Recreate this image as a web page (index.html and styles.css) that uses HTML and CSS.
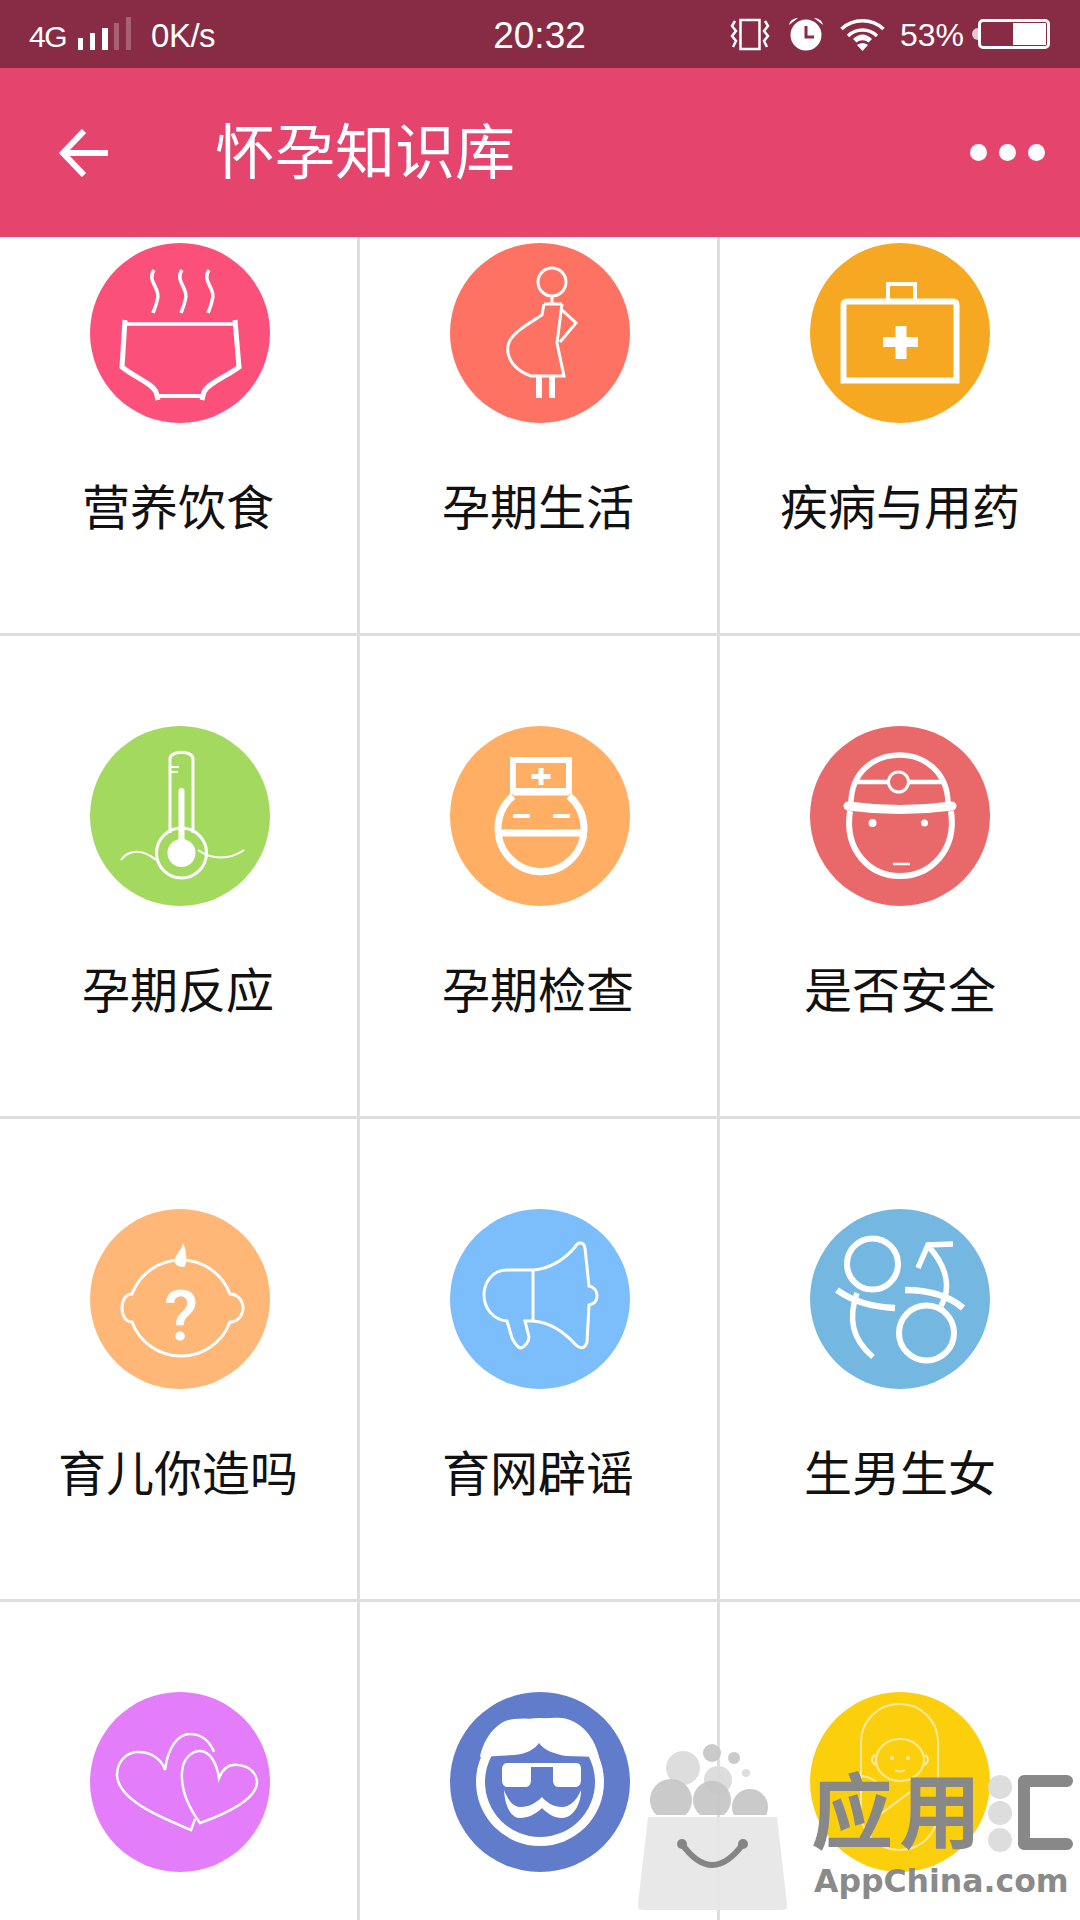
FILE: index.html
```html
<!DOCTYPE html>
<html lang="zh-CN">
<head>
    <meta charset="UTF-8">
    <title>怀孕知识库</title>
    <link rel="stylesheet" href="styles.css">
</head>
<body>

<div class="phone">
    <div class="status-bar">
        <div class="status-left">
            <span class="net">4G</span>
            <svg class="signal" width="56" height="34" viewBox="0 0 56 34">
                <rect class="fl" x="0" y="21" width="5" height="12"/>
                <rect class="fl" x="12" y="16" width="5" height="17"/>
                <rect class="fl" x="24" y="11" width="6" height="22"/>
                <rect class="dim" x="36" y="6" width="5" height="27"/>
                <rect class="dim" x="48" y="0" width="5" height="33"/>
            </svg>
            <span class="speed">0K/s</span>
        </div>
        <div class="clock">20:32</div>
        <div class="status-right">
            <svg width="40" height="34" viewBox="0 0 40 34">
                <rect class="ln" x="10.5" y="3" width="19" height="29" stroke-width="2.5"/>
                <path class="ln" stroke-width="2.5" d="M5 4 L2 9 L6 14 L2 19 L6 24 L3 30 M35 4 L38 9 L34 14 L38 19 L34 24 L37 30"/>
            </svg>
            <svg class="alarm" width="36" height="34" viewBox="0 0 36 34">
                <circle class="fl" cx="18" cy="18" r="15.5"/>
                <path class="fl" d="M1 8 C2 3 6 1 10 1 Z M35 8 C34 3 30 1 26 1 Z"/>
                <path class="cut" d="M18 9 V20 H26"/>
            </svg>
            <svg class="wifi" width="45" height="33" viewBox="0 0 45 33">
                <path class="ln" stroke-width="3.5" d="M1.5 11 C13 0 32 0 43.5 11 M8 18 C16 10 29 10 37 18"/>
                <path class="fl" d="M13 21 C19 15 26 15 32 21 L28.5 24.5 C25 21.5 20 21.5 16.5 24.5 Z M17 27 C20 24.5 25 24.5 28 27 L22.5 33 Z"/>
            </svg>
            <span class="percent">53%</span>
            <div class="battery">
                <div class="battery-nib"></div>
                <div class="battery-body"><div class="battery-level"></div></div>
            </div>
        </div>
    </div>

    <div class="title-bar">
        <svg class="back" width="50" height="48" viewBox="0 0 50 48">
            <path class="ln" stroke-width="6" d="M49 24 H4 M25 2 L4 24 L25 46"/>
        </svg>
        <h1 class="title">怀孕知识库</h1>
        <div class="more"><i></i><i></i><i></i></div>
    </div>

    <div class="grid">
        <div class="cell cell-first">
            <div class="circle c-food">
                <svg viewBox="0 0 180 180">
                    <path class="ln" stroke-width="3.5" d="M64 27 C56 38 72 46 67 58 C66 63 64 67 63 70 M92 27 C84 38 100 46 95 58 C94 63 92 67 91 70 M119 27 C111 38 127 46 122 58 C121 63 119 67 118 70"/>
                    <path class="ln" stroke-width="3.5" d="M35 81 H145"/>
                    <path class="ln" stroke-width="5" d="M35 77 L32 124 C44 134 62 140 66 149 L68 157 M145 77 L149 124 C136 134 118 140 114 149 L112 157"/>
                    <path class="ln" stroke-width="4" d="M68 153 H112"/>
                </svg>
            </div>
            <p class="name">营养饮食</p>
        </div>
        <div class="cell cell-first">
            <div class="circle c-life">
                <svg viewBox="0 0 180 180">
                    <circle class="ln" stroke-width="3" cx="102" cy="39" r="14"/>
                    <path class="ln" stroke-width="3" d="M102 53 V61 M94 61 H112 M112 61 L107 100 L114 133 H81 C66 128 56 116 58 103 C60 90 80 80 92 72 L94 61 M112 67 L126 80 L110 99"/>
                    <path class="fl" d="M86 133 h6 v22 h-6 Z M99 133 h6 v22 h-6 Z"/>
                </svg>
            </div>
            <p class="name">孕期生活</p>
        </div>
        <div class="cell cell-first">
            <div class="circle c-drug">
                <svg viewBox="0 0 180 180">
                    <path class="ln" stroke-width="6" d="M33.5 137.500 V62 Q33.500 58.500 37 58.500 H143 Q146.500 58.500 146.500 62 V137.500 Z"/>
                    <path class="ln" stroke-width="4" d="M78 56 V41 H105 V56"/>
                    <path class="fl" d="M85.5 83 h11 v11 h11.500 v10 h-11.500 v12 h-11 v-12 h-12.500 v-10 h12.500 Z"/>
                </svg>
            </div>
            <p class="name">疾病与用药</p>
        </div>

        <div class="cell">
            <div class="circle c-react">
                <svg viewBox="0 0 180 180">
                    <path class="ln" stroke-width="3" d="M80 107 V33 C80 24 103 24 103 33 V107"/>
                    <path class="ln" stroke-width="2" d="M80 41 H89 M80 46 H88"/>
                    <circle class="ln" stroke-width="3" cx="91.500" cy="127" r="25"/>
                    <circle class="fl" cx="91.500" cy="127" r="14"/>
                    <rect class="fl" x="88.500" y="62" width="6" height="60" rx="3"/>
                    <path class="ln" stroke-width="2" d="M31 134 C38 124 52 122 66 134 M108 124 C122 134 140 134 154 124"/>
                </svg>
            </div>
            <p class="name">孕期反应</p>
        </div>
        <div class="cell">
            <div class="circle c-check">
                <svg viewBox="0 0 180 180">
                    <rect class="ln" stroke-width="6" x="63" y="34" width="56" height="31"/>
                    <path class="ln" stroke-width="7" d="M63 70 A43 43 0 1 0 119 70 M63 66 H119 M48 107 H134"/>
                    <path class="ln" stroke-width="4" d="M63 90 H80 M103 90 H120"/>
                    <path class="ln" stroke-width="5" d="M81.500 50.500 H100.500 M91 42 V59"/>
                </svg>
            </div>
            <p class="name">孕期检查</p>
        </div>
        <div class="cell">
            <div class="circle c-safe">
                <svg viewBox="0 0 180 180">
                    <path class="ln" stroke-width="5.500" d="M41 78 C41 45 65 29 90 29 C113 29 138 45 138 78"/>
                    <path class="ln" stroke-width="4.500" d="M45 56 H78 M98 56 H133"/>
                    <circle class="ln" stroke-width="3" cx="88.500" cy="56" r="10"/>
                    <path class="ln" stroke-width="9" stroke-linecap="round" d="M38 80 Q90 87 142 80"/>
                    <path class="ln" stroke-width="6" d="M40 85 C34 125 60 150 90 150 C120 150 147 125 141 85"/>
                    <circle class="fl" cx="62.500" cy="97" r="4"/>
                    <circle class="fl" cx="114.500" cy="97" r="3.500"/>
                    <path class="ln" stroke-width="2.500" d="M83 138 H100"/>
                </svg>
            </div>
            <p class="name">是否安全</p>
        </div>

        <div class="cell">
            <div class="circle c-baby">
                <svg viewBox="0 0 180 180">
                    <path class="ln" stroke-width="3" d="M42 85 C36 85 32 91 32 99 C32 107 36 113 42 113 A52.300 52.300 0 0 0 140 113 C147 113 153 107 153 99 C153 91 147 85 140 85 A52.300 52.300 0 0 0 42 85 Z"/>
                    <path class="fl" d="M93 34 C92 42 82 48 85 54 C87 58 94 59 95 57 C97 52 97 42 93 34 Z"/>
                    <text class="ask" x="91" y="131" text-anchor="middle">?</text>
                </svg>
            </div>
            <p class="name">育儿你造吗</p>
        </div>
        <div class="cell">
            <div class="circle c-rumor">
                <svg viewBox="0 0 180 180">
                    <path class="ln" stroke-width="3" d="M83 61 H57 C42 61 34 74 34 86 C34 100 44 111 57 112 L62 129 C65 135 68 139 71 139 C75 138 79 132 79 128 L75 112 H83 C100 113 115 124 126 136 C130 140 135 140 137 133 L139 96 C144 95 147 92 147 87 C147 82 144 78 139 77 L135 39 C134 33 128 32 125 38 C115 50 100 60 83 61 Z M83 61 V112"/>
                </svg>
            </div>
            <p class="name">育网辟谣</p>
        </div>
        <div class="cell">
            <div class="circle c-sex">
                <svg viewBox="0 0 180 180">
                    <circle class="ln" stroke-width="6" cx="62.500" cy="55" r="25.500"/>
                    <path class="ln" stroke-width="6.500" d="M27 81 C42 92 62 98 85 99 M95 81 C118 81 138 86 153 99"/>
                    <path class="ln" stroke-width="5.500" d="M47 84 C38 110 42 130 63 148"/>
                    <circle class="ln" stroke-width="6" cx="116.500" cy="124" r="27.500"/>
                    <path class="ln" stroke-width="5.500" d="M131 97 C142 78 136 56 118 37 M143 35 L118 36 L108 59"/>
                </svg>
            </div>
            <p class="name">生男生女</p>
        </div>

        <div class="cell">
            <div class="circle c-love">
                <svg viewBox="0 0 180 180">
                    <path class="ln" stroke-width="2.500" d="M105 127 L101 138 C70 125 28 108 27 83 C27 68 38 60 48 60 C62 60 72 68 75 78 C78 55 88 42 100 42 C112 42 120 50 124 60"/>
                    <path class="ln" stroke-width="2.500" d="M110 131 C96 112 91 95 92 80 C93 66 102 59 110 59 C120 59 127 72 129 86 C133 76 140 72 148 73 C160 74 167 82 167 90 C167 108 135 122 110 131 Z"/>
                </svg>
            </div>
        </div>
        <div class="cell">
            <div class="circle c-granny">
                <svg viewBox="0 0 180 180">
                    <circle class="fl" cx="90" cy="90" r="64"/>
                    <circle class="bg-granny" cx="90" cy="90" r="55"/>
                    <path class="fl" d="M30 65 C34 45 48 28 64 27 C74 26 84 26 89 29 C94 26 102 25 112 26 C130 28 145 45 149 65 L116 64 C104 62 94 58 89 51 C84 58 76 62 64 63 Z"/>
                    <path class="fl" d="M57 71 H126 C130 71 131 74 131 77 V88 C131 92 129 95 126 95 H108 C105 95 103 92 103 88 V75 H81 V88 C81 92 79 95 76 95 H57 C54 95 52 92 52 88 V77 C52 74 54 71 57 71 Z"/>
                    <path class="fl" d="M54 98 C55 116 62 126 70 126 C78 126 86 122 92 116 C98 122 104 126 112 126 C122 126 131 114 131 98 C127 108 120 115 112 115 C104 115 97 111 92 105 C86 111 79 115 71 115 C63 115 58 108 54 98 Z"/>
                </svg>
            </div>
        </div>
        <div class="cell">
            <div class="circle c-care">
                <svg viewBox="0 0 180 180">
                    <rect class="ln-soft" x="51" y="12" width="77" height="146" rx="38"/>
                    <ellipse class="ln-soft" cx="90" cy="68" rx="24" ry="21"/>
                    <path class="ln-soft" d="M65 63 C61 65 61 71 66 73 M115 63 C119 65 119 71 114 73 M85 78 Q90 81 95 78 M50 84 C60 84 68 90 72 96 M100 100 L60 130"/>
                    <circle class="fl-soft" cx="82" cy="66" r="2"/>
                    <circle class="fl-soft" cx="98" cy="66" r="2"/>
                </svg>
            </div>
        </div>
    </div>

    <svg class="watermark" width="1080" height="1920" viewBox="0 0 1080 1920">
        <defs>
            <clipPath id="above-bag"><rect x="630" y="1740" width="170" height="75"/></clipPath>
        </defs>
        <g clip-path="url(#above-bag)">
            <circle class="wm-pale" cx="683" cy="1768" r="17"/>
            <circle class="wm-pale" cx="718" cy="1780" r="14"/>
            <circle class="wm-ball" cx="712" cy="1753" r="9"/>
            <circle class="wm-ball" cx="734" cy="1758" r="6"/>
            <circle class="wm-pale" cx="746" cy="1773" r="4"/>
            <circle class="wm-ball" cx="671" cy="1800" r="21"/>
            <circle class="wm-ball" cx="712" cy="1800" r="19"/>
            <circle class="wm-ball" cx="750" cy="1807" r="18"/>
        </g>
        <path class="wm-bag" d="M648 1817 H777 L787 1904 Q788 1910 781 1910 H644 Q637 1910 638 1904 Z"/>
        <path class="wm-smile" d="M682 1844 Q712 1886 743 1844"/>
        <circle class="wm-dot" cx="682" cy="1844" r="5"/>
        <circle class="wm-dot" cx="743" cy="1844" r="5"/>
        <text class="wm-cn" x="811" y="1842">应用</text>
        <circle class="wm-pale" cx="1000" cy="1787" r="12"/>
        <circle class="wm-pale" cx="1000" cy="1813" r="12"/>
        <circle class="wm-pale" cx="1000" cy="1840" r="12"/>
        <path class="wm-frame" d="M1067 1781 H1024 V1844 H1067"/>
        <text class="wm-en" x="814" y="1892">AppChina.com</text>
    </svg>
</div>

</body>
</html>
```

FILE: styles.css
```css
* {
    margin: 0;
    padding: 0;
    box-sizing: border-box;
}

body {
    background: #ffffff;
    font-family: "Liberation Sans", "Noto Sans CJK SC", sans-serif;
}

.phone {
    position: relative;
    display: flex;
    flex-direction: column;
    width: 1080px;
    height: 1920px;
    overflow: hidden;
}

/* status bar */
.status-bar {
    display: grid;
    grid-template-columns: 1fr auto 1fr;
    align-items: center;
    flex: none;
    height: 68px;
    padding: 0 30px 0 29px;
    background: #882c45;
    color: #ffffff;
}

.status-left,
.status-right {
    display: flex;
    align-items: center;
}

.status-right {
    justify-content: flex-end;
}

.net {
    margin-top: 6px;
    font-size: 30px;
    letter-spacing: -1.5px;
}

.signal {
    margin-left: 12px;
}

.speed {
    margin-top: 3px;
    margin-left: 17px;
    font-size: 33px;
    letter-spacing: -0.5px;
}

.clock {
    margin-top: 3px;
    font-size: 37px;
}

.alarm {
    margin-left: 18px;
}

.wifi {
    margin-left: 16px;
}

.percent {
    margin-top: 2px;
    margin-left: 15px;
    font-size: 32px;
}

.battery {
    display: flex;
    align-items: center;
    margin-left: 8px;
}

.battery-nib {
    width: 6px;
    height: 12px;
    border-radius: 6px 0 0 6px;
    background: #e8c9d1;
}

.battery-body {
    display: flex;
    justify-content: flex-end;
    width: 72px;
    height: 30px;
    padding: 1px;
    border: 3px solid #ffffff;
    border-radius: 5px;
}

.battery-level {
    width: 33px;
    background: #ffffff;
}

/* title bar */
.title-bar {
    display: flex;
    align-items: center;
    flex: none;
    height: 169px;
    padding: 0 35px 0 59px;
    background: #e5446d;
    color: #ffffff;
}

.title {
    margin-left: 106px;
    margin-bottom: 10px;
    font-size: 60px;
    font-weight: 400;
    font-family: "Noto Sans CJK SC", sans-serif;
}

.more {
    display: flex;
    gap: 12px;
    margin-left: auto;
}

.more i {
    width: 17px;
    height: 17px;
    border-radius: 50%;
    background: #ffffff;
}

/* grid */
.grid {
    display: grid;
    grid-template-columns: repeat(3, 360px);
    grid-auto-rows: 483px;
    grid-template-rows: 399px;
}

.cell {
    display: flex;
    flex-direction: column;
    align-items: center;
    padding-top: 90px;
    box-shadow: inset -3px 0 0 #dedede, inset 0 -3px 0 #dedede;
}

.cell:nth-child(3n) {
    box-shadow: inset 0 -3px 0 #dedede;
}

.cell:not(:nth-child(3n)) .name {
    margin-right: 4px;
}

.cell-first {
    padding-top: 6px;
}

.circle {
    flex: none;
    width: 180px;
    height: 180px;
    border-radius: 50%;
}

.circle svg {
    display: block;
    width: 180px;
    height: 180px;
}

.name {
    margin-top: 51px;
    font-family: "Noto Sans CJK SC", sans-serif;
    font-size: 48px;
    line-height: 60px;
    color: #111111;
    white-space: nowrap;
}

.c-food { background: #fb5079; }
.c-life { background: #fd7262; }
.c-drug { background: #f7a823; }
.c-react { background: #a3d95f; }
.c-check { background: #ffae63; }
.c-safe { background: #e9686a; }
.c-baby { background: #ffb778; }
.c-rumor { background: #7cbdfb; }
.c-sex { background: #74b8e2; }
.c-love { background: #e47df9; }
.c-granny { background: #607ccb; }
.c-care { background: #fccf0d; }

/* icon strokes */
.ln {
    fill: none;
    stroke: #ffffff;
}

.fl {
    fill: #ffffff;
}

.dim {
    fill: #ffffff;
    opacity: 0.25;
}

.cut {
    fill: none;
    stroke: #882c45;
    stroke-width: 3;
}

.ask {
    font-family: "Roboto", sans-serif;
    font-size: 70px;
    font-weight: 500;
    fill: #ffffff;
}

.bg-granny {
    fill: #607ccb;
}

.ln-soft {
    fill: none;
    stroke: #fdeaa0;
    stroke-width: 2;
}

.fl-soft {
    fill: #fdeaa0;
}

/* watermark over the page */
.watermark {
    position: absolute;
    top: 0;
    left: 0;
}

.wm-ball {
    fill: #c6c6c6;
    fill-opacity: 0.92;
}

.wm-pale {
    fill: #dadada;
    fill-opacity: 0.92;
}

.wm-bag {
    fill: #e6e6e6;
    fill-opacity: 0.92;
}

.wm-smile {
    fill: none;
    stroke: #858585;
    stroke-width: 6;
}

.wm-dot {
    fill: #858585;
}

.wm-cn {
    font-family: "Noto Sans CJK SC", sans-serif;
    font-size: 82px;
    font-weight: 700;
    letter-spacing: 6px;
    fill: #888888;
}

.wm-frame {
    fill: none;
    stroke: #888888;
    stroke-width: 12;
    stroke-linejoin: round;
    stroke-linecap: round;
}

.wm-en {
    font-family: "DejaVu Sans", sans-serif;
    font-size: 31.5px;
    font-weight: 700;
    fill: #8a8a8a;
}
```
